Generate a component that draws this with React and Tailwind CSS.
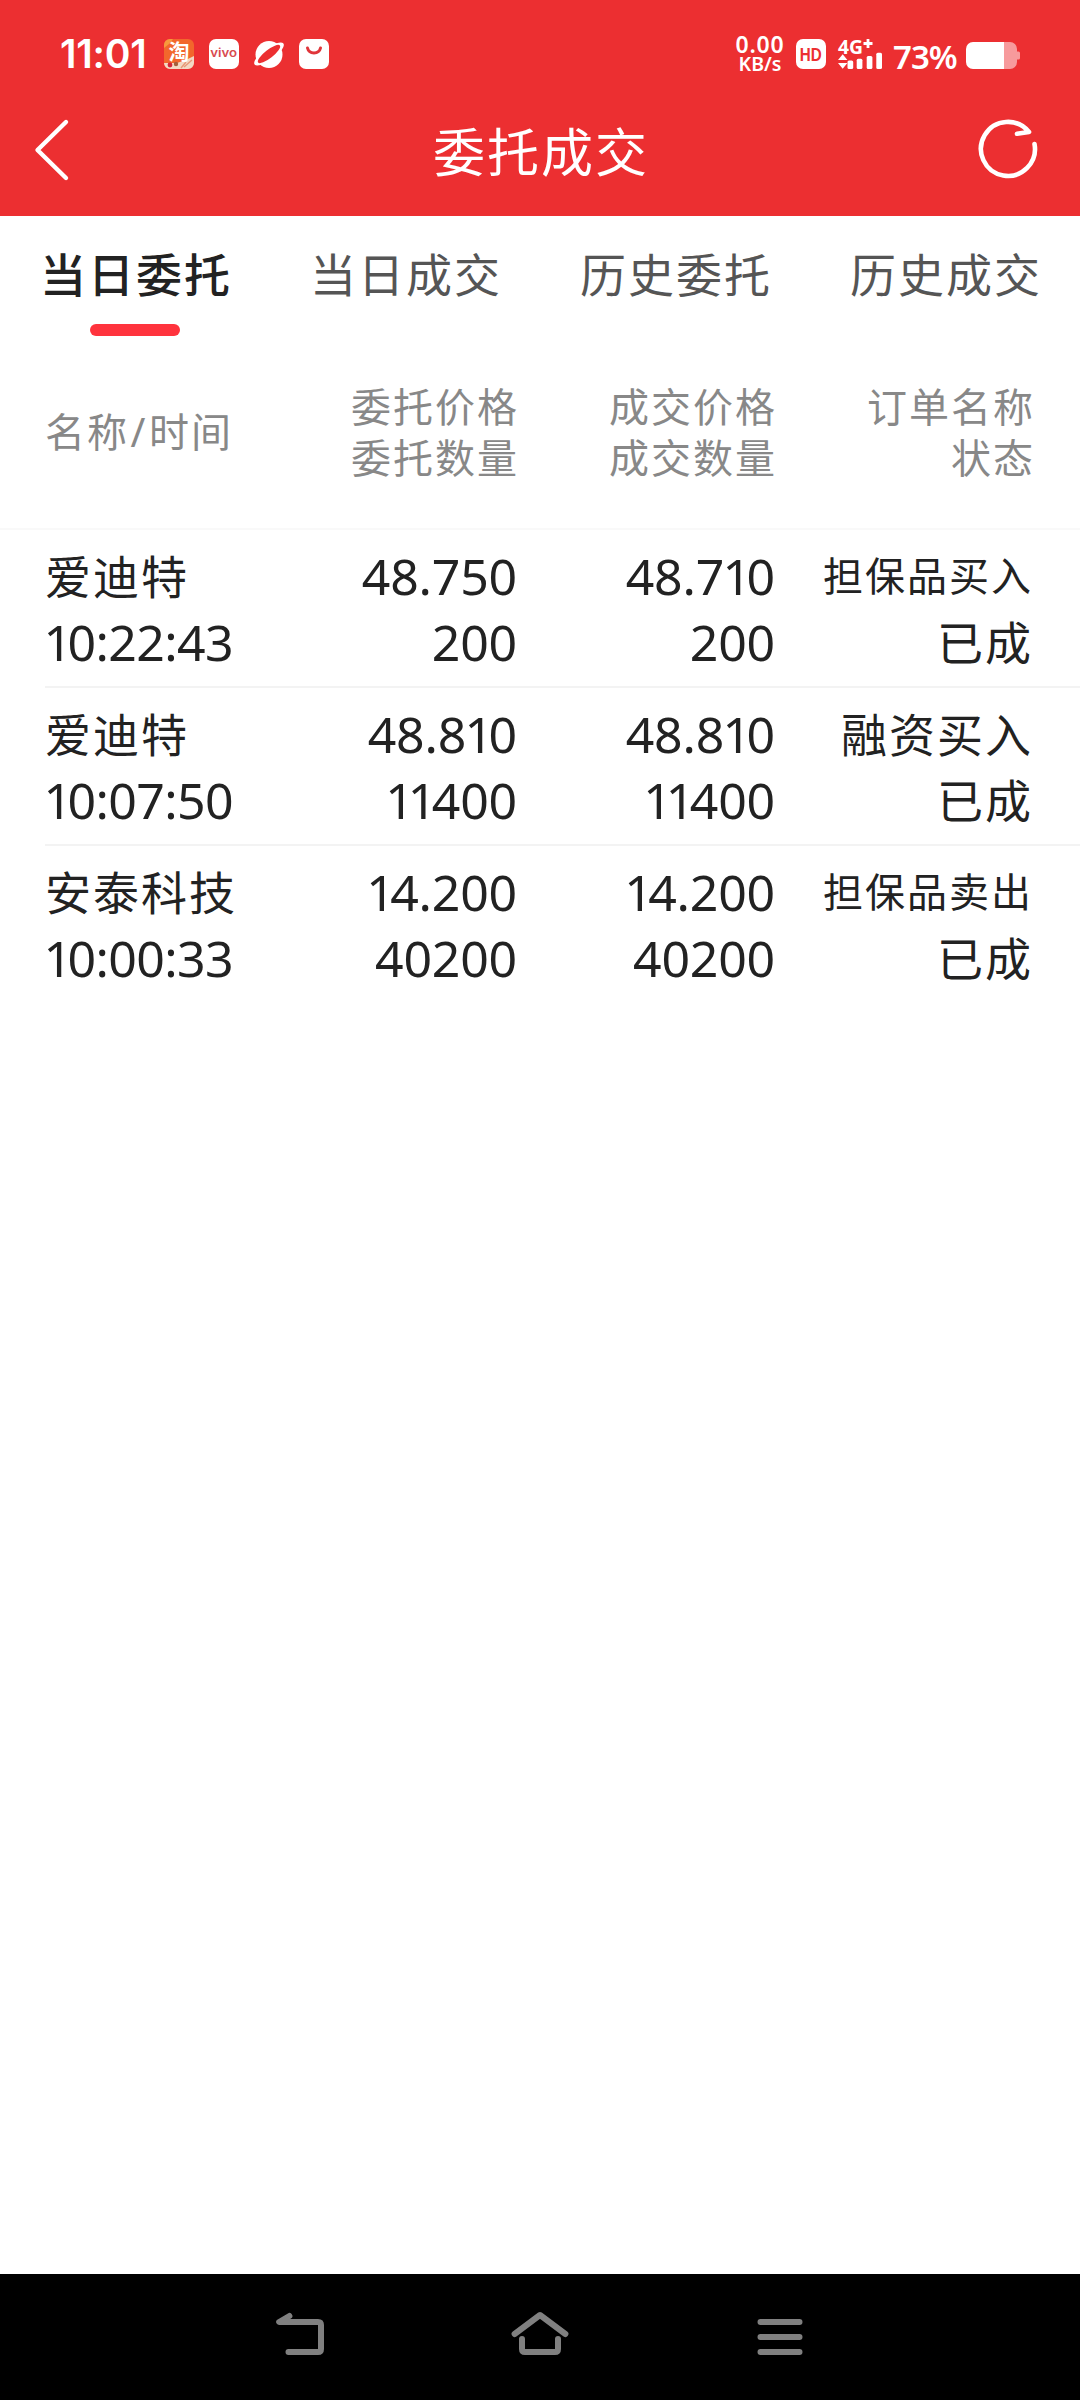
import React from "react";

const tabs = ["当日委托", "当日成交", "历史委托", "历史成交"];

const orders = [
  { name: "爱迪特", time: "10:22:43", price: "48.750", amount: "200", dealPrice: "48.710", dealAmount: "200", type: "担保品买入", status: "已成" },
  { name: "爱迪特", time: "10:07:50", price: "48.810", amount: "11400", dealPrice: "48.810", dealAmount: "11400", type: "融资买入", status: "已成" },
  { name: "安泰科技", time: "10:00:33", price: "14.200", amount: "40200", dealPrice: "14.200", dealAmount: "40200", type: "担保品卖出", status: "已成" },
];

// The digit 1 is set narrower than the others
const Num = ({ value, time }) => (
  <span className={time ? "tracking-[-0.6px]" : "tracking-[-0.2px]"}>
    {value.split(/(1)/).filter(Boolean).map((part, i) =>
      part === "1" ? (
        <span key={i} className="-ml-[1.5px] tracking-[-4.6px]">1</span>
      ) : (
        <span key={i}>{part}</span>
      )
    )}
  </span>
);

const StatusBar = () => (
  <div className="flex h-[84px] items-start justify-between pl-[60px] pr-[60px]">
    <div className="flex pt-[39px]">
      <span className="w-[104px] font-[Inter] text-[39px] font-semibold leading-[30px] tracking-[-0.2px]">11:01</span>
      <div className="flex gap-[15px]">
        <svg className="overflow-visible" width="30" height="30" viewBox="0 0 30 30">
          <rect width="30" height="30" rx="6" fill="#f2672c" />
          <path d="M0 6a6 6 0 0 1 6-6h3L5 5 0 9z" fill="#f79a3c" />
          <path d="M0 24q8 0 13 0 8-2 17-7v7a6 6 0 0 1-6 6H6a6 6 0 0 1-6-6z" fill="#f3d9c4" />
          <circle cx="6" cy="26" r="2.4" fill="#d7263a" />
          <circle cx="12" cy="25" r="2.2" fill="#a4603c" />
          <path d="M20 28l8-7M17 29l5-6" stroke="#e79a78" strokeWidth="1.4" />
          <text x="15" y="20" textAnchor="middle" fontFamily="Noto Sans CJK SC" fontWeight="700" fontSize="21" fill="#fff">淘</text>
        </svg>
        <div className="flex size-[30px] items-center justify-center rounded-[7px] bg-white font-[Inter] text-[11.5px] font-semibold leading-none text-[#d94a50]">
          <span className="scale-x-115">vivo</span>
        </div>
        <svg width="30" height="30" viewBox="0 0 30 30">
          <circle cx="15" cy="15.5" r="13.5" fill="#fff" />
          <ellipse cx="15" cy="15" rx="17.8" ry="6" transform="rotate(-36 15 15)" fill="#fff" />
          <ellipse cx="15" cy="15" rx="13.8" ry="4.2" transform="rotate(-38 15 15)" fill="#ec2f31" />
        </svg>
        <svg width="30" height="30" viewBox="0 0 30 30">
          <rect width="30" height="30" rx="7" fill="#fff" />
          <path d="M8.500 9C10 15.500 20 15.500 21.500 9" fill="none" stroke="#e0353a" strokeWidth="3" strokeLinecap="round" />
        </svg>
      </div>
    </div>
    <div className="flex pt-[35px]">
      <div className="mr-[11px] w-[50px] text-center font-['Noto_Sans'] font-semibold">
        <div className="-mt-px text-[23px] leading-[20px] tracking-[0.8px]">0.00</div>
        <div className="pt-px text-[19.5px] leading-[18px]">KB/s</div>
      </div>
      <div className="mr-[12px] mt-1 flex size-[30px] items-center justify-center rounded-[7px] bg-white font-['Liberation_Sans'] text-[19px] font-bold leading-none text-[#ec2f31]">
        <span className="scale-x-80">HD</span>
      </div>
      <svg className="mr-[10px] mt-1 overflow-visible" width="45" height="30" viewBox="0 0 45 30" fill="#fff">
        <text x="0" y="14.500" fontFamily="Noto Sans" fontWeight="700" fontSize="20" textLength="25" lengthAdjust="spacingAndGlyphs">4G</text>
        <path d="M30 0v9M25.500 4.500h9" stroke="#fff" strokeWidth="2.8" />
        <path d="M0 21l4.700-5.700L9.400 21zM0 24h9.400l-4.700 5.700z" />
        <rect x="9.500" y="21.500" width="5.700" height="8.500" rx="1.500" />
        <rect x="18.700" y="19.700" width="5.700" height="10.300" rx="1.500" />
        <rect x="28.700" y="17" width="5.700" height="13" rx="1.500" />
        <rect x="38.300" y="13.700" width="5.700" height="16.300" rx="1.500" />
      </svg>
      <span className="w-[73px] pt-[7px] font-['Noto_Sans'] text-[33px] font-semibold leading-[30px] tracking-[-1px]">73%</span>
      <svg className="mt-[7px]" width="54" height="27" viewBox="0 0 54 27">
        <path d="M38 0h6a7 7 0 0 1 7 7v2.500h1.500a1.500 1.500 0 0 1 1.500 1.500v5a1.500 1.500 0 0 1-1.500 1.500H51V20a7 7 0 0 1-7 7h-6z" fill="#f79a9c" />
        <path d="M7 0h31v27H7a7 7 0 0 1-7-7V7a7 7 0 0 1 7-7z" fill="#fff" />
      </svg>
    </div>
  </div>
);

const TitleBar = () => (
  <div className="flex h-[132px] items-center justify-between pl-[33px] pr-[40px]">
    <svg width="71" height="64" viewBox="0 0 71 64" fill="none" stroke="#fff" strokeWidth="4.4" strokeLinecap="round" strokeLinejoin="round">
      <path d="M33 4L4.500 32l28.500 28" />
    </svg>
    <h1 className="pl-[2px] pt-[4px] text-[52px] leading-[60px] tracking-[2px]">委托成交</h1>
    <svg width="64" height="64" viewBox="0 0 64 64" fill="none" stroke="#fff" strokeWidth="4.6" strokeLinecap="round" strokeLinejoin="round">
      <path d="M58.500 26A27 27 0 1 1 53 14L41 15.800" />
    </svg>
  </div>
);

const App = () => {
  return (
    <div className="flex h-[2400px] w-[1080px] flex-col overflow-hidden bg-white font-['Noto_Sans','Noto_Sans_CJK_SC',sans-serif] text-[#222222]">
      <header className="h-[216px] bg-[#ec2f31] text-white">
        <StatusBar />
        <TitleBar />
      </header>

      {/* Tabs */}
      <nav className="grid h-[144px] grid-cols-4 pt-[28px]">
        {tabs.map((tab, i) => (
          <div key={tab} className="flex flex-col items-center">
            <span className={`pl-[2px] text-[46px] leading-[60px] tracking-[2px] ${i === 0 ? "font-medium text-[#222222]" : "text-[#555555]"}`}>
              {tab}
            </span>
            {i === 0 && <div className="mt-[20px] h-3 w-[90px] rounded-full bg-[#ff333d]" />}
          </div>
        ))}
      </nav>

      {/* Column headings */}
      <div className="grid h-[170px] grid-cols-[261px_258px_258px_258px] items-center border-b-2 border-[#f9f9f9] pb-[25px] text-right text-[40px] leading-[51px] tracking-[2px] text-[#888888]">
        <div className="pb-px pl-[45px] text-left">名称<span className="px-[1.5px]">/</span>时间</div>
        <div>委托价格<br />委托数量</div>
        <div>成交价格<br />成交数量</div>
        <div>订单名称<br />状态</div>
      </div>

      {/* Orders */}
      <main className="grow">
        {orders.map((o, i) => (
          <div key={o.time} className="pl-[45px]">
            <div
              className={`grid h-[158px] grid-cols-[214px_258px_258px_258px] pt-[13px] text-right text-[50px] leading-[66px] ${
                i < orders.length - 1 ? "border-b-2 border-[#f3f3f3]" : ""
              }`}
            >
              <div className="text-left">
                <div className="h-[66px] text-[46px] tracking-[2px]">{o.name}</div>
                <div className="h-[66px] whitespace-nowrap"><Num value={o.time} time /></div>
              </div>
              <div>
                <div className="h-[66px]"><Num value={o.price} /></div>
                <div className="h-[66px]"><Num value={o.amount} /></div>
              </div>
              <div>
                <div className="h-[66px]"><Num value={o.dealPrice} /></div>
                <div className="h-[66px]"><Num value={o.dealAmount} /></div>
              </div>
              <div className="text-[46px] tracking-[2px]">
                <div className={`h-[66px] ${o.type.length > 4 ? "text-[40px]" : ""}`}>{o.type}</div>
                <div className="h-[66px]">{o.status}</div>
              </div>
            </div>
          </div>
        ))}
      </main>

      {/* System navigation */}
      <footer className="flex h-[126px] items-center justify-center gap-[180px] bg-black">
        <svg width="60" height="60" viewBox="0 0 60 60" fill="none" stroke="#808080" strokeWidth="6" strokeLinecap="round" strokeLinejoin="round">
          <path d="M19.400 9 9.200 15H48q3 0 3 3v24q0 3-3 3H18.500" />
        </svg>
        <svg width="60" height="60" viewBox="0 0 60 60" fill="none" stroke="#808080" strokeWidth="6" strokeLinecap="round" strokeLinejoin="round">
          <path d="M4.600 27 30 8l25.400 19M12 32v10q0 3 3 3h30q3 0 3-3v-10" />
        </svg>
        <svg width="60" height="60" viewBox="0 0 60 60" fill="none" stroke="#808080" strokeWidth="6" strokeLinecap="round">
          <path d="M10.500 15h39M10.500 30h39M10.500 45h39" />
        </svg>
      </footer>
    </div>
  );
};

export default App;
